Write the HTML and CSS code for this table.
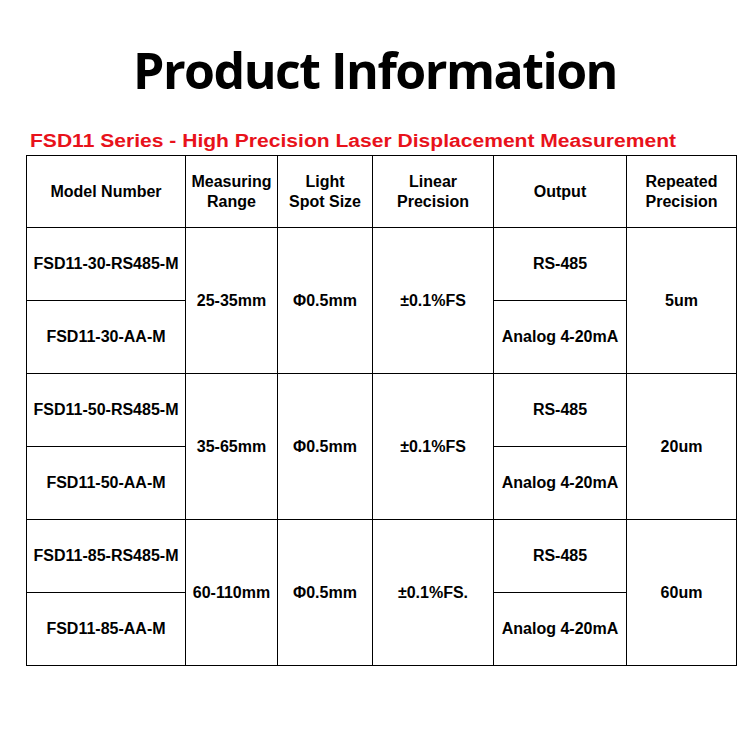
FILE: index.html
```html
<!DOCTYPE html>
<html lang="en">
<head>
<meta charset="utf-8">
<title>Product Information</title>
<link rel="stylesheet" href="styles.css">
</head>
<body>
<main class="page">
  <h1 class="title">Product Information</h1>
  <h2 class="subtitle"><span class="subtitle-text">FSD11 Series - High Precision Laser Displacement Measurement</span></h2>
  <table class="spec">
    <colgroup>
      <col class="c-model">
      <col class="c-range">
      <col class="c-spot">
      <col class="c-linear">
      <col class="c-output">
      <col class="c-repeat">
    </colgroup>
    <thead>
      <tr class="head-row">
        <th>Model Number</th>
        <th>Measuring<br>Range</th>
        <th>Light<br>Spot Size</th>
        <th>Linear<br>Precision</th>
        <th>Output</th>
        <th>Repeated<br>Precision</th>
      </tr>
    </thead>
    <tbody>
      <tr class="row">
        <td>FSD11-30-RS485-M</td>
        <td rowspan="2">25-35mm</td>
        <td rowspan="2">Φ0.5mm</td>
        <td rowspan="2">±0.1%FS</td>
        <td>RS-485</td>
        <td rowspan="2">5um</td>
      </tr>
      <tr class="row">
        <td>FSD11-30-AA-M</td>
        <td>Analog 4-20mA</td>
      </tr>
      <tr class="row">
        <td>FSD11-50-RS485-M</td>
        <td rowspan="2">35-65mm</td>
        <td rowspan="2">Φ0.5mm</td>
        <td rowspan="2">±0.1%FS</td>
        <td>RS-485</td>
        <td rowspan="2">20um</td>
      </tr>
      <tr class="row">
        <td>FSD11-50-AA-M</td>
        <td>Analog 4-20mA</td>
      </tr>
      <tr class="row">
        <td>FSD11-85-RS485-M</td>
        <td rowspan="2">60-110mm</td>
        <td rowspan="2">Φ0.5mm</td>
        <td rowspan="2">±0.1%FS.</td>
        <td>RS-485</td>
        <td rowspan="2">60um</td>
      </tr>
      <tr class="row">
        <td>FSD11-85-AA-M</td>
        <td>Analog 4-20mA</td>
      </tr>
    </tbody>
  </table>
</main>
</body>
</html>
```
FILE: styles.css
```css
* { box-sizing: border-box; }
html, body { margin: 0; padding: 0; background: #fff; }
body { width: 750px; height: 750px; overflow: hidden; }

.page {
  display: flex;
  flex-direction: column;
  align-items: stretch;
}

.title {
  margin: 40px 0 0 0;
  font-family: "Open Sans", "Noto Sans", sans-serif;
  font-weight: 700;
  font-size: 50px;
  line-height: 60px;
  letter-spacing: -1.5px;
  text-align: center;
  color: #000;
}

.subtitle {
  margin: 31px 0 0 30px;
  font-family: "Liberation Sans", Arial, sans-serif;
  font-weight: 700;
  font-size: 18px;
  line-height: 20px;
  color: #e8121b;
  white-space: nowrap;
}
.subtitle-text {
  display: inline-block;
  transform: scaleX(1.17);
  transform-origin: left center;
}

.spec {
  margin: 4px 0 0 26px;
  width: 710px;
  border-collapse: collapse;
  table-layout: fixed;
  font-family: "Liberation Sans", Arial, sans-serif;
  font-weight: 700;
  font-size: 16px;
  line-height: 20px;
  color: #000;
}
.c-model { width: 159px; }
.c-range { width: 92px; }
.c-spot { width: 95px; }
.c-linear { width: 121px; }
.c-output { width: 133px; }
.c-repeat { width: 110px; }

.spec th, .spec td {
  border: 1.5px solid #000;
  padding: 0;
  text-align: center;
  vertical-align: middle;
  font-weight: 700;
  white-space: nowrap;
}
.head-row { height: 72px; }
.row { height: 73px; }
```
